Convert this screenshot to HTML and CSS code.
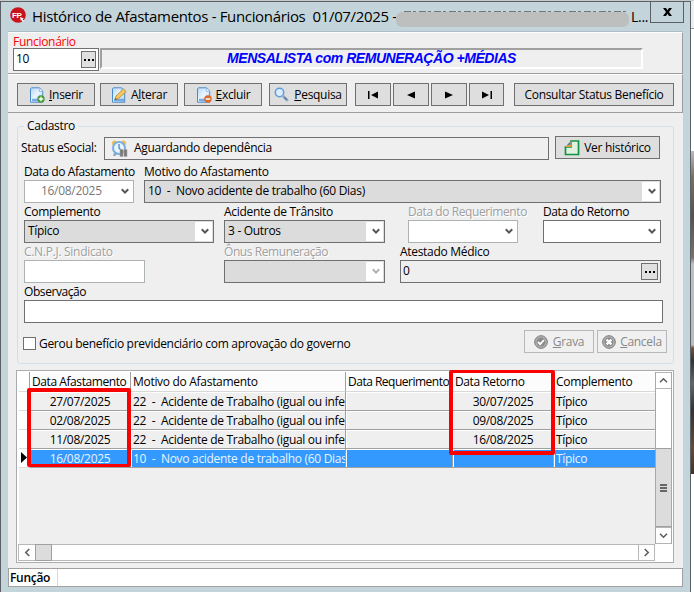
FILE: index.html
```html
<!DOCTYPE html>
<html lang="pt-BR">
<head>
<meta charset="utf-8">
<title>Histórico de Afastamentos</title>
<link rel="stylesheet" href="styles.css">
</head>
<body>
<svg width="0" height="0" class="defs" aria-hidden="true">
  <defs>
    <linearGradient id="page" x1="0" y1="0" x2="1" y2="1"><stop offset="0" stop-color="#b4d6f7"/><stop offset=".5" stop-color="#eaf5ff"/><stop offset="1" stop-color="#a9cdf0"/></linearGradient>
    <symbol id="doc" viewBox="0 0 16 16"><path d="M2.500.8h8l3.200 3.400v11H1.500V1.800z" fill="url(#page)" stroke="#4b8ac9"/><path d="M10.300 1v3.400h3.200" fill="#fff" stroke="#7aaade" stroke-width=".8"/><path d="M3 13h10" stroke="#75abe0" stroke-width="2.500"/></symbol>
    <symbol id="chev" viewBox="0 0 8 7"><path d="M.8 1.200 4 4.600 7.200 1.200" fill="none" stroke="currentColor" stroke-width="2"/></symbol>
    <symbol id="arrow" viewBox="0 0 9 9"><path d="M1 6.300 4.500 2.800 8 6.300" fill="none" stroke="#606060" stroke-width="1.600"/></symbol>
  </defs>
</svg>
<div class="screen">
  <main class="window">
    <header class="title">
      <svg class="logo" viewBox="0 0 16 16"><circle cx="8" cy="8" r="7.800" fill="#c9131d"/><text x="2" y="10.500" class="fp">FP</text><path d="m10 10 4 1.500-1.500.6 1.600 1.800-1 .8-1.600-1.800-.6 1.200z" fill="#fff"/></svg>
      <span class="caption">Histórico de Afastamentos - Funcionários&nbsp; 01/07/2025 -</span>
      <span class="redact"></span>
      <span class="caption-end">L...</span>
      <button class="close"><svg width="9" height="8" viewBox="0 0 9 8"><path d="M0 0h3l1.500 2.300L6 0h3L6 4l3 4H6L4.500 5.700 3 8H0l3-4z"/></svg></button>
    </header>
    <div class="client">
      <section class="employee">
        <label class="red">Funcionário</label>
        <div class="emp-row">
          <div class="edit code"><span>10</span><button class="dots"><i></i><i></i><i></i></button></div>
          <div class="name"><b>MENSALISTA com REMUNERAÇÃO +MÉDIAS</b></div>
        </div>
      </section>
      <nav class="toolbar">
        <button class="btn w78"><svg class="ic"><use href="#doc"/><circle cx="12" cy="12" r="3.700" fill="#4b9b3c"/><path d="M12 9.800v4.400M9.800 12h4.400" stroke="#fff" stroke-width="1.300"/></svg><span><u>I</u>nserir</span></button>
        <button class="btn w78 g5"><svg class="ic"><use href="#doc"/><path d="m4 13 1-4 7.500-7 2.700 2.600-7.700 7z" fill="#f4c85b" stroke="#b48132" stroke-width=".8"/><path d="m4 13 .6-2.200L6 12.200z" fill="#765432"/></svg><span>A<u>l</u>terar</span></button>
        <button class="btn w78 g6"><svg class="ic"><use href="#doc"/><circle cx="12" cy="12" r="3.700" fill="#e06a28"/><path d="M9.800 12h4.400" stroke="#fff" stroke-width="1.500"/></svg><span><u>E</u>xcluir</span></button>
        <button class="btn w78 g7 find"><svg class="ic"><circle cx="5.500" cy="5.500" r="4.200" fill="#d8edff" stroke="#5c9bd9" stroke-width="1.500"/><path d="m9 9 4 4" stroke="#9db2c9" stroke-width="3" stroke-linecap="round"/><path d="m10 10 3 3" stroke="#5d789a" stroke-width="1.500"/></svg><span><u>P</u>esquisa</span></button>
        <button class="btn w36 g8"><svg width="12" height="8"><path d="M1 0h1.500v8H1zM11 .5v7L4 4z"/></svg></button>
        <button class="btn w36 g2"><svg width="12" height="8"><path d="M10 .5v7L2 4z"/></svg></button>
        <button class="btn w36 g2"><svg width="12" height="8"><path d="M2 .5v7L10 4z"/></svg></button>
        <button class="btn w35 g2"><svg width="12" height="8"><path d="M9.500 0H11v8H9.500zM1 .5v7L8 4z"/></svg></button>
        <button class="btn w160 g10"><span>Consultar Status Benefício</span></button>
      </nav>
      <section class="body">
        <fieldset class="form">
          <legend>Cadastro</legend>
          <div class="status-row">
            <label class="st">Status eSocial:</label>
            <div class="edit status"><svg width="17" height="17" viewBox="0 0 17 17"><circle cx="3.500" cy="3" r="2.500" fill="#f0bc50"/><circle cx="12.500" cy="3" r="2.500" fill="#f0bc50"/><circle cx="8" cy="8" r="6" fill="#e7f5ff" stroke="#79aee0" stroke-width="2"/><path d="M8 4v4l2 2" fill="none" stroke="#467fb6" stroke-width="1.200"/><path d="m3 13-1 3h2l2-2z" fill="#7ba4cc"/><path d="M9 9.500h3v7H9zM13 9.500h3v7h-3z" fill="#777" stroke="#aaa" stroke-width=".6"/></svg><span class="wait">Aguardando dependência</span></div>
            <button class="btn hist"><svg width="16" height="17" viewBox="0 0 16 17"><path d="M7 2h7.500v13.500H1.500V8L7 8z" fill="#e2f1df" stroke="#129347" stroke-width="1.700"/><path d="M7.500 1.500 1.500 8h6z" fill="#e59b35"/><path d="m6.500 2.500-4 4 4-1z" fill="#2688cb"/></svg><span>Ver histórico</span></button>
          </div>
          <div class="line first">
            <div class="field f110"><label class="tight">Data do Afastamento</label><div class="combo off"><span>16/08/2025</span><svg><use href="#chev"/></svg></div></div>
            <div class="field f517 m10"><label>Motivo do Afastamento</label><div class="combo gray"><span>10&nbsp; -&nbsp; Novo acidente de trabalho (60 Dias)</span><i class="drop"><svg><use href="#chev"/></svg></i></div></div>
          </div>
          <div class="line">
            <div class="field f190"><label>Complemento</label><div class="combo gray"><span>Típico</span><i class="drop"><svg><use href="#chev"/></svg></i></div></div>
            <div class="field f161 m10"><label>Acidente de Trânsito</label><div class="combo gray"><span>3 - Outros</span><i class="drop"><svg><use href="#chev"/></svg></i></div></div>
            <div class="field f110 m23"><label class="dim tight">Data do Requerimento</label><div class="combo off2"><span></span><svg><use href="#chev"/></svg></div></div>
            <div class="field f118 m25"><label class="tight">Data do Retorno</label><div class="combo"><span></span><svg><use href="#chev"/></svg></div></div>
          </div>
          <div class="line">
            <div class="field f121"><label class="dim wide">C.N.P.J. Sindicato</label><div class="combo off2"></div></div>
            <div class="field f161 m79"><label class="dim tight">Ônus Remuneração</label><div class="combo gray"><span></span><i class="drop pale"><svg><use href="#chev"/></svg></i></div></div>
            <div class="field f261 m15"><label>Atestado Médico</label><div class="combo flat"><span>0</span><button class="dots big"><i></i><i></i><i></i></button></div></div>
          </div>
          <div class="line"><div class="field f639"><label class="tight">Observação</label><div class="combo"></div></div></div>
          <div class="actions">
            <i class="check"></i><label class="ger">Gerou benefício previdenciário com aprovação do governo</label>
            <button class="btn dis gr"><svg width="14" height="14" viewBox="0 0 14 14"><circle cx="7" cy="7" r="6.300" fill="#b4b4b4" stroke="#777"/><circle cx="7" cy="7" r="4.500" fill="#8b8b8b"/><path d="m4 7 2.200 2.200L10 5" fill="none" stroke="#fff" stroke-width="1.800"/></svg><span><u>G</u>rava</span></button>
            <button class="btn dis ca"><svg width="14" height="14" viewBox="0 0 14 14"><circle cx="7" cy="7" r="6.300" fill="#b4b4b4" stroke="#777"/><circle cx="7" cy="7" r="4.500" fill="#8b8b8b"/><path d="m4.600 4.600 4.800 4.800m0-4.800L4.600 9.400" stroke="#fff" stroke-width="2.200"/></svg><span><u>C</u>ancela</span></button>
          </div>
        </fieldset>
        <div class="grid">
          <div class="view">
            <div class="tbl">
              <div class="tr head"><i></i><span class="tight">Data Afastamento</span><span>Motivo do Afastamento</span><span class="tighter">Data Requerimento</span><span class="tight">Data Retorno</span><span>Complemento</span></div>
              <div class="tr"><i></i><span class="c">27/07/2025</span><span>22&nbsp; -&nbsp; Acidente de Trabalho (igual ou infe</span><span></span><span class="c">30/07/2025</span><span>Típico</span></div>
              <div class="tr"><i></i><span class="c">02/08/2025</span><span>22&nbsp; -&nbsp; Acidente de Trabalho (igual ou infe</span><span></span><span class="c">09/08/2025</span><span>Típico</span></div>
              <div class="tr"><i></i><span class="c">11/08/2025</span><span>22&nbsp; -&nbsp; Acidente de Trabalho (igual ou infe</span><span></span><span class="c">16/08/2025</span><span>Típico</span></div>
              <div class="tr sel"><i><svg width="6" height="11"><path d="M0 0v11l6-5.500z"/></svg></i><span class="c">16/08/2025</span><span>10&nbsp; -&nbsp; Novo acidente de trabalho (60 Dias</span><span></span><span></span><span>Típico</span></div>
            </div>
            <div class="vbar"><b><svg width="9" height="9"><use href="#arrow"/></svg></b><i></i><em><s></s><s></s><s></s></em><b><svg class="down" width="9" height="9"><use href="#arrow"/></svg></b></div>
          </div>
          <div class="hbar"><b><svg class="left" width="9" height="9"><use href="#arrow"/></svg></b><em></em><i></i><b class="last"><svg class="right" width="9" height="9"><use href="#arrow"/></svg></b></div>
          <div class="mark m1"></div><div class="mark m2"></div>
        </div>
      </section>
      <footer><b>Função</b><i></i></footer>
    </div>
  </main>
  <aside class="behind"><i class="top"></i><i class="blank"></i><i class="photo"></i></aside>
</div>
</body>
</html>
```

FILE: styles.css
```css
* { box-sizing: border-box; }
body { margin: 0; width: 694px; height: 592px; overflow: hidden; font: 12px/16px "Open Sans", "Noto Sans", sans-serif; letter-spacing: -.3px; color: #000; }
button { font: inherit; letter-spacing: inherit; color: inherit; padding: 0; margin: 0; border-radius: 0; }
i, em { font-style: normal; }
label, span { white-space: nowrap; }
.tight { letter-spacing: -.42px; }
.tighter { letter-spacing: -.5px; }
.wide { letter-spacing: -.3px; }
.defs { position: absolute; }
.screen { display: flex; height: 592px; padding-top: 1px; background: #c8cbcb; }
.window { width: 691px; height: 591px; border: 1px solid #5b6067; border-bottom: 0; background: #c3d5db; padding: 0 7px; flex: none; }
.title { height: 29px; display: flex; align-items: center; position: relative; }
.logo { width: 16px; height: 16px; margin-left: 2px; margin-top: -3px; flex: none; }
.fp { font: bold 8px "Liberation Sans", sans-serif; fill: #fff; letter-spacing: -.3px; }
.caption { font-size: 15px; margin-left: 6px; margin-top: -1px; width: 364px; letter-spacing: -.34px; flex: none; }
.redact { position: relative; width: 233px; height: 15px; border-radius: 6px; background: #bdbebe; margin-top: 5px; flex: none; }
.redact::before { content: ""; position: absolute; left: 8px; right: 3px; top: -1px; height: 1px; opacity: .7; background: repeating-linear-gradient(90deg, #4c5053 0 7px, transparent 7px 9px, #4c5053 9px 12px, transparent 12px 15px); }
.caption-end { font-size: 14px; margin-left: 2px; }
.close { position: absolute; right: -1px; top: -1px; width: 34px; height: 22px; background: #c3d5db; border: 1px solid #5b6067; display: grid; place-items: center; }
.client { height: 556px; width: 675px; background: #efefef; display: flex; flex-direction: column; border-top: 1px solid #b1bdc8; }
.employee { height: 42px; padding: 0 0 0 5px; border-top: 1px solid #fff; border-bottom: 1px solid #9e9e9e; border-right: 1px solid #9e9e9e; }
.employee label { display: block; height: 15px; line-height: 17px; }
.red { color: #f00; }
.emp-row { display: flex; gap: 1px; }
.edit { border: 1px solid #707070; height: 23px; background: #fff; display: flex; align-items: center; }
.code { width: 86px; padding: 0 2px; justify-content: space-between; }
.code span { margin-top: -1px; }
.dots { width: 15px; height: 17px; border: 1px solid #707070; background: #e0e0e0; display: flex; gap: 2px; align-items: center; justify-content: center; }
.dots i { width: 2px; height: 2px; background: #000; }
.name { width: 543px; height: 21px; border: 2px solid #fff; border-top-color: #a0a0a0; border-left-color: #a0a0a0; font: italic bold 14px/16px "Liberation Sans", Arial, sans-serif; color: #00f; text-align: center; letter-spacing: -.46px; }
.toolbar { height: 39px; display: flex; align-items: center; padding-left: 9px; border-top: 1px solid #fff; border-bottom: 1px solid #9e9e9e; border-right: 1px solid #9e9e9e; padding-top: 2px; }
.btn { height: 23px; border: 1px solid #707070; background: #dedede; display: flex; align-items: center; justify-content: center; gap: 4px; flex: none; white-space: nowrap; }
.ic { width: 16px; height: 16px; }
.ic use { width: 15px; height: 15px; }
.find { gap: 5px; }
.find .ic { width: 15px; height: 15px; }
.w78 { width: 78px; } .w36 { width: 36px; } .w35 { width: 35px; } .w160 { width: 160px; }
.g2 { margin-left: 2px; } .g5 { margin-left: 5px; } .g6 { margin-left: 6px; } .g7 { margin-left: 7px; } .g8 { margin-left: 8px; } .g10 { margin-left: 10px; }
.body { height: 455px; padding: 5px 9px 0 8px; }
.form { margin: 0 0 0 1px; padding: 0 0 0 6px; width: 657px; height: 246px; border: 1px solid #d3dfe8; border-radius: 3px; min-width: 0; }
.form legend { padding: 0 3px; margin-left: 0; line-height: 16px; height: 16px; }
.status-row { display: flex; height: 23px; margin-top: 3px; align-items: center; margin-left: -3px; }
.st { width: 83px; }
.status { width: 445px; background: #efefef; padding-left: 6px; gap: 6px; }
.wait, .st { margin-top: -1px; }
.hist { width: 105px; margin: -2px 0 0 6px; gap: 4px; }
.line { display: flex; height: 40px; }
.first { margin-top: 4px; }
.field label { display: block; height: 16px; line-height: 16px; }
.combo { height: 23px; border: 1px solid #707070; background: #fff; display: flex; align-items: center; justify-content: space-between; padding-left: 3px; color: #000; }
.combo svg { width: 8px; height: 7px; margin-right: 4px; color: #555; flex: none; }
.drop svg { position: relative; left: 1px; }
.combo > span { margin-top: -1px; }
.gray { background: #dcdcdc; }
.drop { width: 17px; height: 19px; background: #fff; margin-right: 1px; display: grid; place-items: center; }
.drop svg { margin: 0; }
.pale svg { color: #b0b0b0; }
.off, .off2 { border-color: #adb2b5; }
.off { color: #777; padding-left: 16px; }
.flat { background: #efefef; padding-left: 2px; }
.big { width: 17px; margin-right: 2px; }
.dim { color: #a0a0a0; text-shadow: 1px 1px #fff; }
.f110 { width: 110px; } .f517 { width: 517px; } .f190 { width: 190px; } .f161 { width: 161px; } .f118 { width: 118px; } .f121 { width: 121px; } .f261 { width: 261px; } .f639 { width: 639px; }
.m10 { margin-left: 10px; } .m23 { margin-left: 23px; } .m25 { margin-left: 25px; } .m79 { margin-left: 79px; } .m15 { margin-left: 15px; }
.actions { display: flex; margin: 6px 0 0 -1px; height: 23px; }
.check { width: 13px; height: 13px; border: 1px solid #707070; background: #fff; margin: 7px 3px 0 0; }
.ger { width: 485px; margin-top: 6px; }
.dis { width: 70px; border-color: #b5b9bb; background: #f0f0f0; color: #888; }
.gr { gap: 5px; } .ca { margin-left: 3px; gap: 4px; }
.grid { position: relative; width: 658px; height: 193px; margin-top: 6px; border: 1px solid #a9adb0; padding: 1px; background: #fff; }
.view { display: flex; height: 172px; }
.tbl { width: 637px; background: #efefef; border-left: 1px solid #fff; }
.tr { display: grid; grid-template-columns: 11px 101px 215px 107px 101px 1fr; grid-template-rows: 19px; height: 19px; line-height: 19px; }
.tr > * { overflow: hidden; border-right: 1px solid #a0a0a0; border-bottom: 1px solid #a0a0a0; padding-left: 2px; }
.tr > i { background: #fff; border-bottom-color: #ddd; padding: 3px 0 0 2px; }
.tr > i svg { display: block; }
.tr > span { box-shadow: inset 1px 1px #fff; }
.tr > :last-child { border-right: 0; }
.tr.head { line-height: 20px; height: 20px; grid-template-rows: 20px; background: #fcfcfc; }
.head > * { border-bottom-color: #d8d8d8; }
.tr .c { text-align: center; padding: 0; }
.sel > span { background: #3399ff; color: #e8f4ff; }
.vbar { width: 17px; display: flex; flex-direction: column; border: solid #a8a8a8; border-width: 0 1px; background: #fff; }
.vbar b { height: 17px; border: solid #b5b5b5; border-width: 1px 0; display: grid; place-items: center; flex: none; }
.vbar i { height: 59px; }
.vbar em { flex: 1; background: #dcdcdc; border: solid #a0a0a0; border-width: 1px 0; display: flex; flex-direction: column; gap: 1px; align-items: center; justify-content: center; }
.vbar s { width: 7px; height: 2px; background: #666; }
.down { transform: rotate(180deg); } .left { transform: rotate(-90deg); } .right { transform: rotate(90deg); }
.hbar { display: flex; width: 637px; height: 17px; border: 1px solid #b8b8b8; background: #fff; }
.hbar b { width: 16px; display: grid; place-items: center; }
.hbar .last { border-left: 1px solid #b8b8b8; }
.hbar em { width: 17px; border: 1px solid #a0a0a0; background: #dcdcdc; margin: -1px 0; }
.hbar i { flex: 1; }
.mark { position: absolute; border: 4px solid #fb0000; border-radius: 2px; }
.m1 { left: 10px; top: 17px; width: 104px; height: 79px; border-bottom-width: 3px; }
.m2 { left: 432px; top: -1px; width: 106px; height: 85px; border-top-width: 3px; }
footer { margin-top: auto; height: 19px; background: #fff; border: 1px solid #a0a0a0; display: flex; padding-left: 1px; }
footer b { width: 47px; line-height: 17px; font-weight: 600; }
footer i { width: 1px; background: #d8d8d8; }
.behind { width: 3px; background: #fff; display: flex; flex-direction: column; }
.top { height: 28px; background: #efefef; border-bottom: 1px solid #999; }
.blank { height: 122px; background: #fff; }
.photo { height: 323px; background: linear-gradient(#bbb 0, #777062 8%, #55534d 20%, #77736a 33%, #c0c0c2 35%, #bbb 60%, #76503c 61%, #343434 65%, #666 72%, #333 80%, #684936 92%, #453227); }
```
